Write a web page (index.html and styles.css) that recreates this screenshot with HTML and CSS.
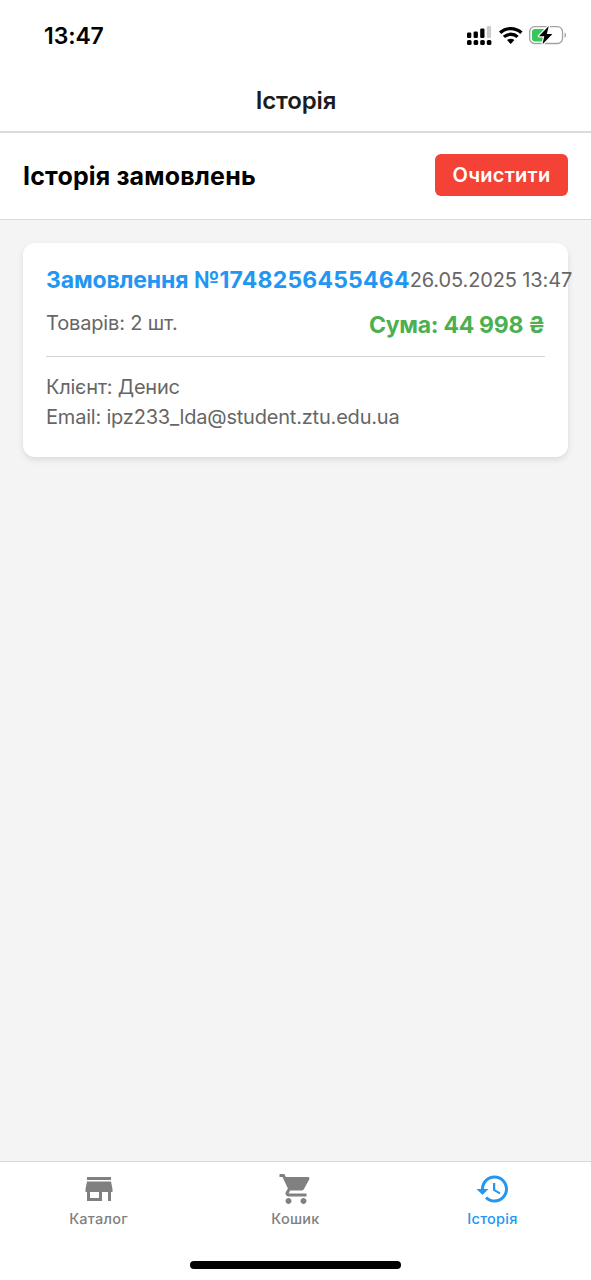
FILE: index.html
```html
<!DOCTYPE html>
<html lang="uk">
<head>
<meta charset="utf-8">
<title>Історія</title>
<link rel="stylesheet" href="styles.css">
</head>
<body>
<div class="screen">
  <div class="status">
    <span class="clock">13:47</span>
    <svg class="status-icons" width="102" height="26" viewBox="0 0 102 26">
      <g fill="#000">
        <rect x="2" y="10.5" width="4.3" height="5.5" rx="1.3"/><rect x="8.6" y="9.5" width="4.3" height="6.5" rx="1.3"/><rect x="15.2" y="6.5" width="4.3" height="9.5" rx="1.3"/>
        <rect x="2" y="18" width="4.6" height="5" rx="1.6"/><rect x="8.6" y="18" width="4.6" height="5" rx="1.6"/><rect x="15.2" y="18" width="4.6" height="5" rx="1.6"/><rect x="21.8" y="18" width="4.6" height="5" rx="1.6"/>
      </g>
      <rect x="21.8" y="4" width="4.3" height="12" rx="1.3" fill="#ccc"/>
      <g fill="none" stroke="#000" stroke-width="3.3"><path d="M35.1 10.7a15.7 15.7 0 0 1 21.3 0"/><path d="M38.9 14.9a10.2 10.2 0 0 1 13.7 0"/></g>
      <path d="M45.700 22l-3.7-3.9a5.400 5.400 0 0 1 7.400 0z" fill="#000"/>
      <rect x="64.7" y="4.7" width="32.8" height="16.8" rx="5" fill="#fff" stroke="#a2a2a2" stroke-width="1.3"/>
      <path d="M70 7h11v12.500h-11a3 3 0 0 1-3-3v-6.500a3 3 0 0 1 3-3z" fill="#34c759"/>
      <path d="M99.500 10.500c2 .8 2 4.600 0 5.400z" fill="#a2a2a2"/>
      <path d="M83.800 4L73.900 14.200h5.400L77.500 22.300l9.900-10.400h-5.600z" fill="#000" stroke="#fff" stroke-width="2.400" paint-order="stroke" stroke-linejoin="round"/>
    </svg>
  </div>
  <header class="nav"><span class="nav-title">Історія</span></header>
  <section class="toolbar">
    <h1 class="heading">Історія замовлень</h1>
    <button class="clear"><span class="clear-text">Очистити</span></button>
  </section>
  <main class="list">
    <article class="order">
      <div class="row top">
        <span class="number"><span class="word">Замовлення</span> №1748256455464</span><span class="date">26.05.2025 13:47</span>
      </div>
      <div class="row totals">
        <span class="count">Товарів: 2 шт.</span><span class="sum">Сума: 44 998 ₴</span>
      </div>
      <div class="customer">
        <div><span class="client">Клієнт: Денис</span></div>
        <div><span class="email">Email: ipz233_lda@student.ztu.edu.ua</span></div>
      </div>
    </article>
  </main>
  <nav class="tabs">
    <div class="tab"><svg class="icon" viewBox="0 0 24 24"><path d="M20 4H4v2h16V4zm1 10v-2l-1-5H4l-1 5v2h1v6h10v-6h4v6h2v-6h1zm-9 4H6v-4h6v4z"/></svg><span>Каталог</span></div>
    <div class="tab"><svg class="icon" viewBox="0 0 24 24"><path d="M7 18c-1.100 0-1.990.9-1.990 2S5.900 22 7 22s2-.9 2-2-.9-2-2-2zM1 2v2h2l3.600 7.590-1.350 2.450c-.16.28-.25.61-.25.960 0 1.100.9 2 2 2h12v-2H7.420c-.14 0-.25-.11-.25-.25l.03-.12.900-1.630h7.450c.75 0 1.410-.41 1.750-1.030l3.580-6.490c.08-.14.12-.31.12-.48 0-.55-.45-1-1-1H5.210l-.94-2H1zm16 16c-1.100 0-1.990.9-1.990 2s.89 2 1.990 2 2-.9 2-2-.9-2-2-2z"/></svg><span>Кошик</span></div>
    <div class="tab active"><svg class="icon" viewBox="0 0 24 24"><path d="M13 3c-4.970 0-9 4.030-9 9H1l3.890 3.890.07.14L9 12H6c0-3.870 3.130-7 7-7s7 3.130 7 7-3.130 7-7 7c-1.930 0-3.680-.79-4.940-2.060l-1.420 1.420C8.270 19.990 10.510 21 13 21c4.970 0 9-4.030 9-9s-4.030-9-9-9zm-1 5v5l4.280 2.540.72-1.210-3.500-2.080V8H12z"/></svg><span>Історія</span></div>
  </nav>
  <div class="home"><div class="home-bar"></div></div>
</div>
</body>
</html>
```
FILE: styles.css
```css
* { box-sizing: border-box; }
body { margin: 0; font-family: Inter, "Noto Sans", sans-serif; background: #fff; }
.screen { width: 591px; height: 1280px; display: flex; flex-direction: column; overflow: hidden; }
.screen span, .heading { white-space: nowrap; }
.status { height: 70px; padding: 0 24px 0 44px; display: flex; align-items: center; justify-content: space-between; }
.clock { padding-top: 2px; font-size: 23px; font-weight: 600; letter-spacing: -.1px; }
.status-icons { display: block; }
.nav { height: 63px; border-bottom: 2px solid #dadada; display: flex; align-items: center; justify-content: center; color: #1c1c1e; }
.nav-title { padding-left: 1px; font-size: 24px; font-weight: 600; letter-spacing: -.15px; }
.toolbar { height: 87px; padding: 0 23px; border-bottom: 1px solid #d8d8d8; display: flex; align-items: center; justify-content: space-between; }
.heading { margin: 0; padding-bottom: 1px; font-size: 25px; font-weight: 700; letter-spacing: .17px; }
.clear { width: 133px; height: 42px; margin-bottom: 2px; padding: 0; border: 0; border-radius: 6px; background: #f44336; color: #fff; font: 600 20px Inter, sans-serif; letter-spacing: .25px; }
.list { flex: 1; padding: 23px; background: #f4f4f4; }
.order { height: 214px; padding: 22px 23px; border-radius: 12px; background: #fff; color: #666; font-size: 20px; box-shadow: 0 3px 6px rgba(0,0,0,.1); }
.row { display: flex; justify-content: space-between; }
.top { height: 30px; align-items: center; }
.number { color: #2196f3; font-size: 23px; font-weight: 700; letter-spacing: .2px; }
.word { letter-spacing: -.15px; }
.date { letter-spacing: -.12px; }
.totals { height: 62px; padding-top: 14px; border-bottom: 1px solid #d4d4d4; line-height: 30px; }
.count { margin-top: -1px; letter-spacing: -.16px; }
.sum { color: #4caf50; font-size: 23px; font-weight: 700; line-height: 32px; letter-spacing: -.28px; }
.customer { padding-top: 15px; line-height: 30px; }
.client { letter-spacing: -.23px; }
.email { letter-spacing: -.2px; }
.tabs { height: 89px; border-top: 1px solid #d8d8d8; display: grid; grid-template-columns: repeat(3, 1fr); }
.tab { display: flex; flex-direction: column; align-items: center; padding-top: 9px; color: #808080; font-size: 14.500px; font-weight: 500; line-height: 24px; letter-spacing: .25px; }
.active { color: #2196f3; }
.icon { width: 36px; height: 36px; fill: currentColor; }
.home { height: 30px; display: flex; justify-content: center; padding-top: 11px; }
.home-bar { width: 211px; height: 8px; border-radius: 4px; background: #000; }
```
